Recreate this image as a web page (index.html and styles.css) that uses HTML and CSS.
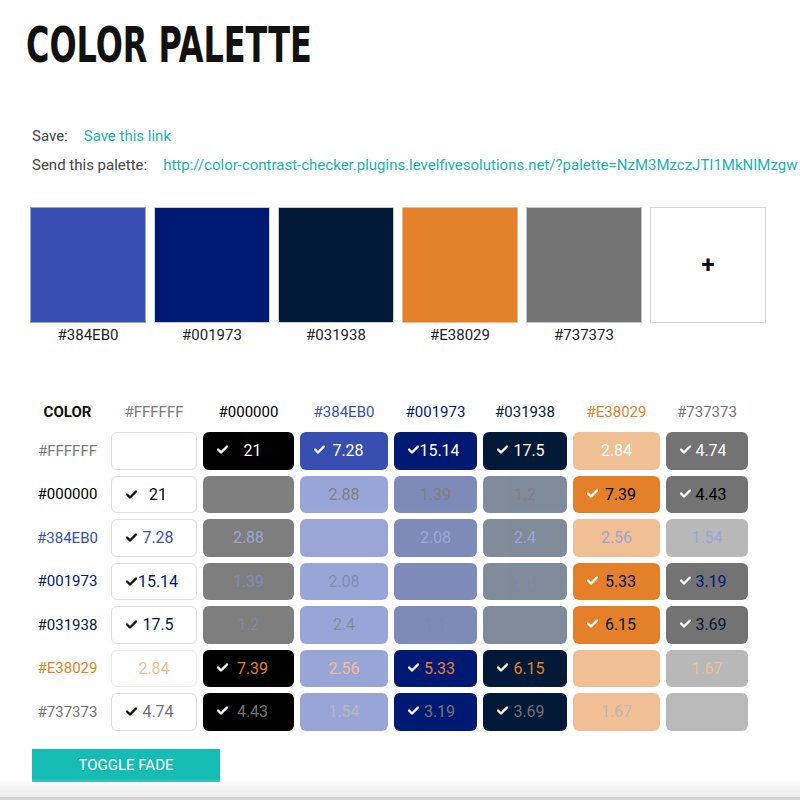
FILE: index.html
```html
<!DOCTYPE html>
<html>
<head>
<meta charset="utf-8">
<link rel="stylesheet" href="styles.css">
</head>
<body>
<div class="page">
  <h1 class="title"><span>COLOR PALETTE</span></h1>

  <div class="links">
    <div class="link-row"><span class="lbl">Save:</span><a class="lnk">Save this link</a></div>
    <div class="link-row"><span class="lbl">Send this palette:</span><a class="lnk">http://color-contrast-checker.plugins.levelfivesolutions.net/?palette=NzM3MzczJTI1MkNIMzgw</a></div>
  </div>

  <div class="swatches">
    <div class="sw"><div class="chip c-384"></div><div class="sw-lbl">#384EB0</div></div>
    <div class="sw"><div class="chip c-001"></div><div class="sw-lbl">#001973</div></div>
    <div class="sw"><div class="chip c-031"></div><div class="sw-lbl">#031938</div></div>
    <div class="sw"><div class="chip c-e38"></div><div class="sw-lbl">#E38029</div></div>
    <div class="sw"><div class="chip c-737"></div><div class="sw-lbl">#737373</div></div>
    <div class="sw"><div class="chip add">+</div></div>
  </div>

  <div class="grid">
    <div class="hd hd-color">COLOR</div>
    <div class="hd t-fffl">#FFFFFF</div>
    <div class="hd t-000">#000000</div>
    <div class="hd t-384">#384EB0</div>
    <div class="hd t-001">#001973</div>
    <div class="hd t-031">#031938</div>
    <div class="hd t-e38">#E38029</div>
    <div class="hd t-737">#737373</div>

    <!-- row FFFFFF -->
    <div class="rl t-fffl">#FFFFFF</div>
    <div class="cell b-fff t-fff"></div>
    <div class="cell b-000 t-fff ok"><svg class="ck" viewBox="0 0 11 9"><path d="M1 4.5 L4 7.5 L10 1.5"/></svg>21</div>
    <div class="cell b-384 t-fff ok"><svg class="ck" viewBox="0 0 11 9"><path d="M1 4.5 L4 7.5 L10 1.5"/></svg>7.28</div>
    <div class="cell b-001 t-fff ok"><svg class="ck" viewBox="0 0 11 9"><path d="M1 4.5 L4 7.5 L10 1.5"/></svg>15.14</div>
    <div class="cell b-031 t-fff ok"><svg class="ck" viewBox="0 0 11 9"><path d="M1 4.5 L4 7.5 L10 1.5"/></svg>17.5</div>
    <div class="cell b-e38 t-fff fade">2.84</div>
    <div class="cell b-737 t-fff ok"><svg class="ck" viewBox="0 0 11 9"><path d="M1 4.5 L4 7.5 L10 1.5"/></svg>4.74</div>

    <!-- row 000000 -->
    <div class="rl t-000">#000000</div>
    <div class="cell b-fff t-000 ok"><svg class="ck dark" viewBox="0 0 11 9"><path d="M1 4.5 L4 7.5 L10 1.5"/></svg>21</div>
    <div class="cell b-000 fade"></div>
    <div class="cell b-384 t-000 fade">2.88</div>
    <div class="cell b-001 t-000 fade">1.39</div>
    <div class="cell b-031 t-000 fade">1.2</div>
    <div class="cell b-e38 t-000 ok"><svg class="ck" viewBox="0 0 11 9"><path d="M1 4.5 L4 7.5 L10 1.5"/></svg>7.39</div>
    <div class="cell b-737 t-000 ok"><svg class="ck" viewBox="0 0 11 9"><path d="M1 4.5 L4 7.5 L10 1.5"/></svg>4.43</div>

    <!-- row 384EB0 -->
    <div class="rl t-384">#384EB0</div>
    <div class="cell b-fff t-384 ok"><svg class="ck dark" viewBox="0 0 11 9"><path d="M1 4.5 L4 7.5 L10 1.5"/></svg>7.28</div>
    <div class="cell b-000 t-384 fade">2.88</div>
    <div class="cell b-384 fade"></div>
    <div class="cell b-001 t-384 fade">2.08</div>
    <div class="cell b-031 t-384 fade">2.4</div>
    <div class="cell b-e38 t-384 fade">2.56</div>
    <div class="cell b-737 t-384 fade">1.54</div>

    <!-- row 001973 -->
    <div class="rl t-001">#001973</div>
    <div class="cell b-fff t-001 ok"><svg class="ck dark" viewBox="0 0 11 9"><path d="M1 4.5 L4 7.5 L10 1.5"/></svg>15.14</div>
    <div class="cell b-000 t-001 fade">1.39</div>
    <div class="cell b-384 t-001 fade">2.08</div>
    <div class="cell b-001 fade"></div>
    <div class="cell b-031 t-001 fade">1.1</div>
    <div class="cell b-e38 t-001 ok"><svg class="ck" viewBox="0 0 11 9"><path d="M1 4.5 L4 7.5 L10 1.5"/></svg>5.33</div>
    <div class="cell b-737 t-001 ok"><svg class="ck" viewBox="0 0 11 9"><path d="M1 4.5 L4 7.5 L10 1.5"/></svg>3.19</div>

    <!-- row 031938 -->
    <div class="rl t-031">#031938</div>
    <div class="cell b-fff t-031 ok"><svg class="ck dark" viewBox="0 0 11 9"><path d="M1 4.5 L4 7.5 L10 1.5"/></svg>17.5</div>
    <div class="cell b-000 t-031 fade">1.2</div>
    <div class="cell b-384 t-031 fade">2.4</div>
    <div class="cell b-001 t-031 fade">1.1</div>
    <div class="cell b-031 fade"></div>
    <div class="cell b-e38 t-031 ok"><svg class="ck" viewBox="0 0 11 9"><path d="M1 4.5 L4 7.5 L10 1.5"/></svg>6.15</div>
    <div class="cell b-737 t-031 ok"><svg class="ck" viewBox="0 0 11 9"><path d="M1 4.5 L4 7.5 L10 1.5"/></svg>3.69</div>

    <!-- row E38029 -->
    <div class="rl t-e38">#E38029</div>
    <div class="cell b-fff t-e38 fade">2.84</div>
    <div class="cell b-000 t-e38 ok"><svg class="ck" viewBox="0 0 11 9"><path d="M1 4.5 L4 7.5 L10 1.5"/></svg>7.39</div>
    <div class="cell b-384 t-e38 fade">2.56</div>
    <div class="cell b-001 t-e38 ok"><svg class="ck" viewBox="0 0 11 9"><path d="M1 4.5 L4 7.5 L10 1.5"/></svg>5.33</div>
    <div class="cell b-031 t-e38 ok"><svg class="ck" viewBox="0 0 11 9"><path d="M1 4.5 L4 7.5 L10 1.5"/></svg>6.15</div>
    <div class="cell b-e38 fade"></div>
    <div class="cell b-737 t-e38 fade">1.67</div>

    <!-- row 737373 -->
    <div class="rl t-737">#737373</div>
    <div class="cell b-fff t-737 ok"><svg class="ck dark" viewBox="0 0 11 9"><path d="M1 4.5 L4 7.5 L10 1.5"/></svg>4.74</div>
    <div class="cell b-000 t-737 ok"><svg class="ck" viewBox="0 0 11 9"><path d="M1 4.5 L4 7.5 L10 1.5"/></svg>4.43</div>
    <div class="cell b-384 t-737 fade">1.54</div>
    <div class="cell b-001 t-737 ok"><svg class="ck" viewBox="0 0 11 9"><path d="M1 4.5 L4 7.5 L10 1.5"/></svg>3.19</div>
    <div class="cell b-031 t-737 ok"><svg class="ck" viewBox="0 0 11 9"><path d="M1 4.5 L4 7.5 L10 1.5"/></svg>3.69</div>
    <div class="cell b-e38 t-737 fade">1.67</div>
    <div class="cell b-737 fade"></div>
  </div>

  <button class="toggle">TOGGLE FADE</button>
</div>
<div class="footer-shade"></div>
</body>
</html>
```

FILE: styles.css
```css
html, body {
  margin: 0;
  padding: 0;
  background: #fff;
  overflow: hidden;
}
body {
  font-family: Roboto, "Open Sans", sans-serif;
  color: #222;
  width: 800px;
  height: 800px;
  position: relative;
}
.page {
  padding: 0 0 0 30px;
}
.title {
  margin: 0;
  padding-top: 20px;
  height: 53px;
  font-family: "Liberation Sans Narrow", "DejaVu Sans Condensed", sans-serif;
  font-weight: 700;
  font-size: 50px;
  line-height: 50px;
  color: #111;
  white-space: nowrap;
}
.title span {
  display: inline-block;
  margin-left: -4px;
  transform: scaleX(0.71);
  transform-origin: left center;
}
.links {
  margin-top: 53px;
  font-size: 15px;
}
.link-row {
  height: 29px;
  line-height: 20px;
  white-space: nowrap;
  display: flex;
  padding-left: 2px;
  overflow: hidden;
}
.lbl { color: #444; margin-right: 16px; flex: none; }
.lnk { color: #1ab4ad; }

.swatches {
  margin-top: 23px;
  display: flex;
  gap: 8px;
}
.sw {
  width: 116px;
  display: flex;
  flex-direction: column;
  align-items: center;
}
.chip {
  width: 116px;
  height: 116px;
  box-sizing: border-box;
  border: 1px solid #d6d6d6;
}
.sw-lbl {
  margin-top: 3px;
  font-size: 15px;
  color: #222;
}
.c-384 { background: #384EB0; border-color: #9aa3d4; }
.c-001 { background: #001973; border-color: #c8cde0; }
.c-031 { background: #031938; border-color: #c9ccd3; }
.c-e38 { background: #E38029; border-color: #eebf96; }
.c-737 { background: #737373; border-color: #c7c7c7; }
.add {
  background: #fff;
  display: flex;
  align-items: center;
  justify-content: center;
  font-size: 24px;
  font-weight: 700;
  color: #111;
}

.grid {
  margin-top: 58px;
  display: grid;
  grid-template-columns: 75px 86px 91px 88px 83px 84px 87px 82px;
  grid-template-rows: 24px repeat(7, 37.5px);
  column-gap: 6px;
  row-gap: 6px;
  font-size: 15px;
}
.hd, .rl {
  display: flex;
  align-items: center;
  justify-content: center;
}
.hd { height: 20px; }
.hd-color { font-weight: 700; color: #111; }
.cell {
  position: relative;
  border-radius: 6px;
  display: flex;
  align-items: center;
  justify-content: center;
  font-size: 16px;
  box-sizing: border-box;
  padding-left: 8px;
}
.cell.fade { opacity: 0.5; padding-left: 0; }
.ck {
  position: absolute;
  left: 14px;
  top: 13px;
  width: 11px;
  height: 9px;
  fill: none;
  stroke: #fff;
  stroke-width: 2.4;
  stroke-linecap: round;
  stroke-linejoin: round;
}
.ck.dark { stroke: #111; }

.b-fff { background: #fff; border: 1px solid #dedede; }
.b-000 { background: #000; }
.b-384 { background: #384EB0; }
.b-001 { background: #001973; }
.b-031 { background: #031938; }
.b-e38 { background: #E38029; }
.b-737 { background: #737373; }

.t-fff { color: #fff; }
.t-fffl { color: #7a7a7a; }
.t-000 { color: #000; }
.t-384 { color: #384EB0; }
.t-001 { color: #001973; }
.t-031 { color: #031938; }
.t-e38 { color: #E38029; }
.t-737 { color: #737373; }

.toggle {
  display: block;
  margin-top: 18px;
  margin-left: 2px;
  width: 188px;
  height: 33px;
  border: 0;
  background: #14bcb3;
  color: #fff;
  font-family: Roboto, "Open Sans", sans-serif;
  font-size: 15px;
  padding: 0;
}
.footer-shade {
  position: absolute;
  left: 0;
  right: 0;
  bottom: 0;
  height: 22px;
  background: linear-gradient(rgba(255,255,255,0), #ebebeb);
  border-bottom: 3px solid #d4d4d4;
  box-sizing: border-box;
}
```
